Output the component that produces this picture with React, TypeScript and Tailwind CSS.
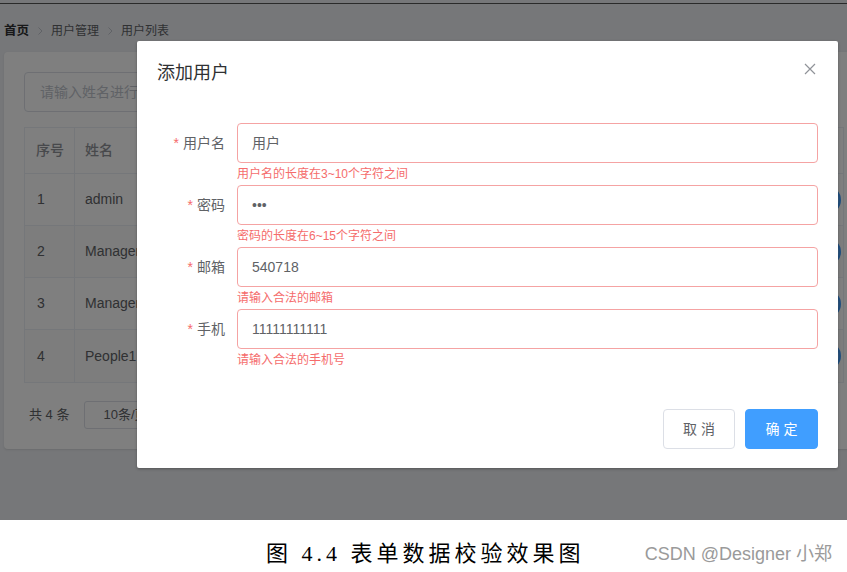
import React from "react";

function Chevron() {
  return (
    <svg width="12" height="12" viewBox="0 0 12 12" className="mx-[5px]">
      <polyline points="4.5,2.5 8,6 4.5,9.5" fill="none" stroke="#c0c4cc" strokeWidth="1" />
    </svg>
  );
}

function FormItem({ label, value, error, last }: { label: string; value: string; error: string; last?: boolean }) {
  return (
    <div className={"flex " + (last ? "" : "mb-[22px]")}>
      <div className="w-[80px] pr-[12px] text-right text-[14px] leading-[40px] text-[#606266] whitespace-nowrap">
        <span className="text-[#f56c6c] mr-[4px]">*</span>
        {label}
      </div>
      <div className="flex-1 relative">
        <div className="h-[40px] border border-[#f5a3a3] rounded-[4px] pl-[14px] pr-[15px] flex items-center text-[14px] text-[#606266]">
          {value}
        </div>
        <div className="absolute left-0 top-full pt-[5px] text-[12px] leading-none text-[#f56c6c] whitespace-nowrap">
          {error}
        </div>
      </div>
    </div>
  );
}

export default function App() {
  const rows = [
    { id: 1, name: "admin" },
    { id: 2, name: "Manager1" },
    { id: 3, name: "Manager2" },
    { id: 4, name: "People1" },
  ];
  return (
    <div className="w-[847px] h-[572px] bg-white overflow-hidden font-['Liberation_Sans','Noto_Sans_CJK_SC',sans-serif]">
      <div className="relative h-[520px] overflow-hidden bg-[#eceef2]">
        <div className="h-[3px]" />
        <div className="h-px bg-[#555]" />
        <nav className="flex items-center h-[20px] mt-[17px] pl-[4px] text-[12px] leading-[20px] text-[#606266]">
          <span className="font-bold text-[#303133] text-[12.5px]">首页</span>
          <Chevron />
          <span>用户管理</span>
          <Chevron />
          <span>用户列表</span>
        </nav>

        <div className="mt-[11px] ml-[4px] w-[870px] h-[397px] bg-white rounded-[4px] shadow-[0_1px_2px_rgba(0,0,0,0.1)] p-[20px]">
          <div className="h-[40px] w-[300px] border border-[#dcdfe6] rounded-[4px] pl-[15px] flex items-center text-[14px] text-[#c0c4cc]">
            请输入姓名进行搜索
          </div>
          <div className="mt-[15px] w-[820px] border border-[#ebeef5] text-[14px]">
            <div className="flex h-[46px] items-center text-[#909399] font-medium border-b border-[#ebeef5]">
              <div className="w-[50px] h-full flex items-center pl-[11px] border-r border-[#ebeef5]">序号</div>
              <div className="flex-1 h-full flex items-center pl-[10px]">姓名</div>
            </div>
            {rows.map((r, i) => (
              <div
                key={r.id}
                className={
                  "flex h-[52px] items-center text-[#606266] " +
                  (i < rows.length - 1 ? "border-b border-[#ebeef5] " : "") +
                  (i % 2 === 1 ? "bg-[#fafafa]" : "bg-white")
                }
              >
                <div className="w-[50px] h-full flex items-center pl-[12px] border-r border-[#ebeef5]">{r.id}</div>
                <div className="flex-1 h-full flex items-center pl-[10px]">{r.name}</div>
                <div className="w-[60px] h-full flex items-center">
                  <div className="ml-[30px] w-[28px] h-[28px] rounded-full border-[2px] border-[#409eff] bg-[#66b1ff]" />
                </div>
              </div>
            ))}
          </div>
          <div className="mt-[18px] flex items-center text-[13px] text-[#606266]">
            <span className="ml-[5px]">共 4 条</span>
            <div className="ml-[15px] w-[110px] h-[28px] border border-[#dcdfe6] rounded-[3px] flex items-center pl-[18px]">
              10条/页
            </div>
          </div>
        </div>

        <div className="absolute inset-0 bg-black/50" />

        <div className="absolute left-[137px] top-[41px] w-[701px] h-[427px] bg-white rounded-[2px] shadow-[0_1px_3px_rgba(0,0,0,0.3)] flex flex-col">
          <div className="relative pt-[20px] px-[20px] pb-[10px]">
            <div className="text-[18px] leading-[24px] text-[#303133]">添加用户</div>
            <svg className="absolute top-[22px] right-[22px]" width="12" height="12" viewBox="0 0 12 12">
              <path d="M1 1 L11 11 M11 1 L1 11" stroke="#909399" strokeWidth="1.2" fill="none" />
            </svg>
          </div>
          <div className="pt-[28px] px-[20px]">
            <FormItem label="用户名" value="用户" error="用户名的长度在3~10个字符之间" />
            <FormItem label="密码" value="•••" error="密码的长度在6~15个字符之间" />
            <FormItem label="邮箱" value="540718" error="请输入合法的邮箱" />
            <FormItem label="手机" value="11111111111" error="请输入合法的手机号" last />
          </div>
          <div className="mt-auto flex justify-end gap-[10px] px-[20px] pb-[19px]">
            <button className="h-[40px] w-[72px] border border-[#dcdfe6] rounded-[4px] bg-white text-[14px] text-[#606266]">
              取 消
            </button>
            <button className="h-[40px] w-[73px] border border-[#409eff] rounded-[4px] bg-[#409eff] text-[14px] text-white">
              确 定
            </button>
          </div>
        </div>
      </div>

      <div className="h-[52px] flex items-center pt-[16px]">
        <span className="ml-[266px] text-[22px] leading-[36px] tracking-[4px] text-black font-['Liberation_Serif','Noto_Sans_CJK_SC',serif]">
          图 4.4 表单数据校验效果图
        </span>
        <span className="ml-auto mr-[15px] text-[18px] leading-[24px] text-[#9a9a9a]">CSDN @Designer 小郑</span>
      </div>
    </div>
  );
}
